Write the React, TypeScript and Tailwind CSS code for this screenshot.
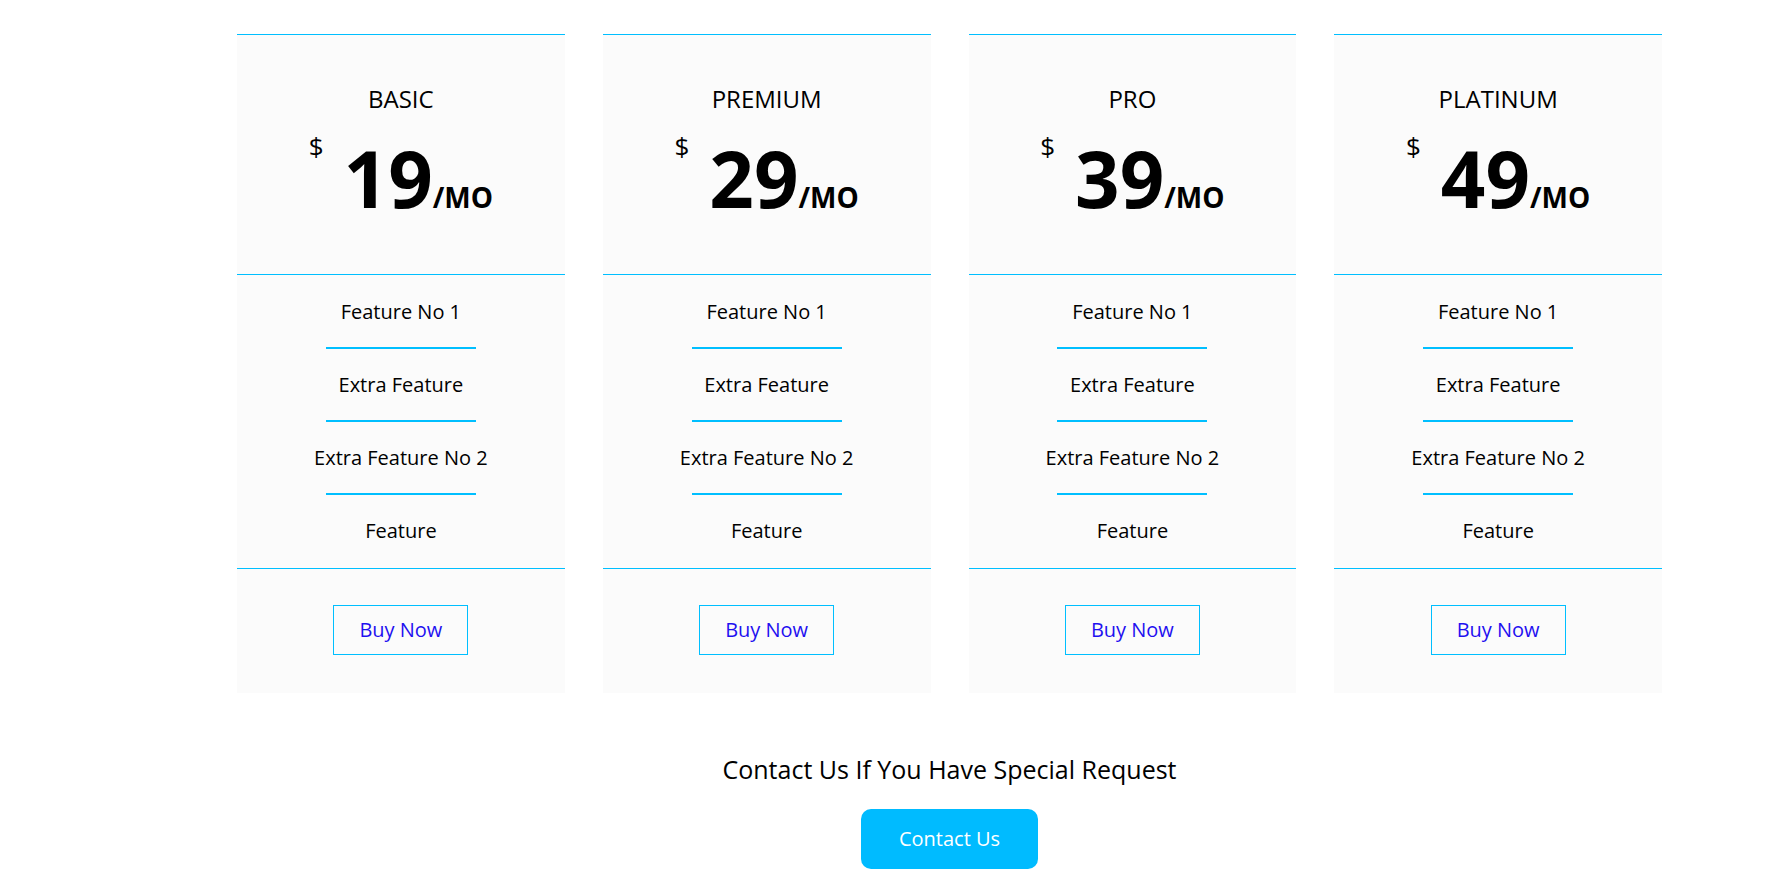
const plans = [
  { name: 'BASIC', price: 19 },
  { name: 'PREMIUM', price: 29 },
  { name: 'PRO', price: 39 },
  { name: 'PLATINUM', price: 49 },
];

const features = ['Feature No 1', 'Extra Feature', 'Extra Feature No 2', 'Feature'];

function PlanCard({ name, price }: { name: string; price: number }) {
  return (
    <div className="bg-[#fbfbfb] border-t border-[#00bfff] text-black">
      {/* header */}
      <div className="h-[239px] flex flex-col items-center pt-[49px]">
        <h3 className="text-[24px] leading-[30px] font-normal">{name}</h3>
        <div className="flex items-start mt-[10px]">
          <span className="text-[26px] leading-[30px] mr-[20px] mt-[7px]">$</span>
          <span className="text-[78px] leading-[78px] font-bold mt-[15px]">{price}</span>
          <span className="text-[28px] leading-none font-bold self-end mb-[6px]">/MO</span>
        </div>
      </div>

      {/* features */}
      <ul className="border-t border-[#00bfff] pb-[2px] pt-[1px]">
        {features.map((f, i) => (
          <li key={f} className="flex flex-col items-center">
            <span className="h-[71px] flex items-center text-[20px]">{f}</span>
            {i < features.length - 1 && <span className="block w-[150px] h-[2px] bg-[#00bfff]" />}
          </li>
        ))}
      </ul>

      {/* footer */}
      <div className="border-t border-[#00bfff] h-[125px] flex justify-center pt-[36px]">
        <button className="w-[135px] h-[50px] border border-[#00bfff] text-[#1f10f0] text-[20px] bg-transparent">
          Buy Now
        </button>
      </div>
    </div>
  );
}

export default function App() {
  return (
    <div className="min-h-screen bg-white font-['Open_Sans',sans-serif]">
      <div className="ml-[237px] w-[1425px] pt-[34px]">
        <div className="grid grid-cols-4 gap-[38px]">
          {plans.map((p) => (
            <PlanCard key={p.name} {...p} />
          ))}
        </div>

        <div className="flex flex-col items-center mt-[56px]">
          <h2 className="text-[25px] leading-[40px] text-black">Contact Us If You Have Special Request</h2>
          <button className="mt-[20px] w-[177px] h-[60px] rounded-[10px] bg-[#00bbff] text-white text-[20px]">
            Contact Us
          </button>
        </div>
      </div>
    </div>
  );
}
